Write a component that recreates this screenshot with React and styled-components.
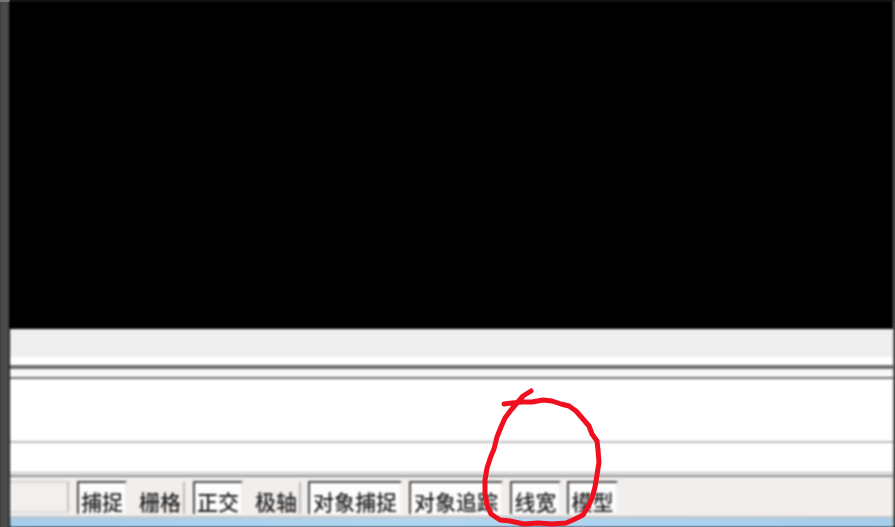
import React from "react";
import styled, { createGlobalStyle } from "styled-components";

const Global = createGlobalStyle`
  html, body { margin: 0; padding: 0; background: #000; overflow: hidden; }
  #root { width: 895px; height: 527px; }
`;

const Shot = styled.div`
  position: relative;
  width: 895px;
  height: 527px;
  display: flex;
  background: #000;
  overflow: hidden;
  font-family: "Noto Sans CJK SC", "Liberation Sans", sans-serif;
`;

const Frame = styled.div`
  width: 10px;
  flex: none;
  box-sizing: border-box;
  background: linear-gradient(90deg, #3a3a3a 0, #4a4a4a 2px, #4a4a4a 7px, #222 10px);
  border-top: 2px solid #777;
`;

const Main = styled.div`
  flex: 1;
  display: flex;
  flex-direction: column;
  min-width: 0;
  border-right: 2px solid #6a6a6a;
  filter: blur(0.8px);
`;

const Canvas = styled.div`
  height: 329px;
  flex: none;
  background: #000;
  border-top: 1px solid #333;
  box-sizing: border-box;
`;

const ScrollBand = styled.div`
  height: 28px;
  flex: none;
  background: #efefef;
`;

const Gap = styled.div`
  flex: none;
  height: ${(p) => p.$h}px;
  background: ${(p) => p.$bg || "#fff"};
`;

const Rule = styled.div`
  flex: none;
  height: ${(p) => p.$h || 2}px;
  background: ${(p) => p.$color || "#6f6f6f"};
`;

const StatusBar = styled.div`
  height: 39px;
  flex: none;
  background: #f1eeec;
  display: flex;
  align-items: flex-start;
  padding-top: 4px;
  box-sizing: border-box;
`;

const Field = styled.div`
  width: 59px;
  height: 32px;
  box-sizing: border-box;
  background: #f2efed;
  border-right: 2px solid #c4c4c4;
  border-top: 2px solid #d8d8d8;
  border-bottom: 2px solid #dcdcdc;
  margin-right: 8px;
`;

const Toggle = styled.div`
  width: ${(p) => p.$w}px;
  height: 33px;
  margin-right: ${(p) => p.$mr}px;
  box-sizing: border-box;
  display: flex;
  align-items: center;
  justify-content: center;
  padding-top: 5px;
  font-size: 21px;
  font-weight: 500;
  line-height: 24px;
  color: #1f1f1f;
  white-space: nowrap;
  background: ${(p) => (p.$on ? "#fdfdfd" : "#f1eeec")};
  border-top: 2px solid ${(p) => (p.$on ? "#4a4a4a" : "#f1eeec")};
  border-left: 2px solid ${(p) => (p.$on ? "#4a4a4a" : "#f1eeec")};
  border-right: 2px solid ${(p) => (p.$on ? "#f1eeec" : "#bcbcbc")};
`;

const Taskbar = styled.div`
  flex: 1;
  background: linear-gradient(90deg, #a4cdec, #b2d7f2 50%, #a4cdec);
  border-top: 2px solid #c4c4c4;
`;

const Scribble = styled.svg`
  position: absolute;
  left: 0;
  top: 0;
  width: 895px;
  height: 527px;
  pointer-events: none;
  filter: blur(0.5px);
`;

const buttons = [
  { t: "捕捉", w: 50, mr: 8, on: true },
  { t: "栅格", w: 50, mr: 8 },
  { t: "正交", w: 50, mr: 8, on: true },
  { t: "极轴", w: 50, mr: 7 },
  { t: "对象捕捉", w: 94, mr: 7, on: true },
  { t: "对象追踪", w: 94, mr: 7, on: true },
  { t: "线宽", w: 51, mr: 6, on: true },
  { t: "模型", w: 51, mr: 0, on: true },
];

export default function App() {
  return (
    <Shot>
      <Global />
      <Frame />
      <Main>
        <Canvas />
        <ScrollBand />
        <Gap $h={8} />
        <Rule $h={4} />
        <Gap $h={8} $bg="#f8f8f8" />
        <Rule $h={2} />
        <Gap $h={62} />
        <Rule $h={2} $color="#bcbcbc" />
        <Gap $h={29} />
        <Rule $h={1} $color="#b4b4b4" />
        <Gap $h={2} $bg="#eee" />
        <Rule $h={2} $color="#8e8e8e" />
        <StatusBar>
          <Field />
          {buttons.map((b) => (
            <Toggle key={b.t} $w={b.w} $mr={b.mr} $on={b.on}>
              {b.t}
            </Toggle>
          ))}
        </StatusBar>
        <Taskbar />
      </Main>
      <Scribble viewBox="0 0 895 527" fill="none">
        <path
          d="M504 404 L512 403 L522 402 L532 402 L543 400 L552 401 L561 404 L569 406 L576 411 L583 419 L589 426 L592 434 L597 441 L598 450 L599 462 L597 475 L595 487 L592 498 L588 507 L583 515 L575 519 L566 523 L552 524 L538 523 L524 524 L510 521 L500 520 L491 514 L487 505 L485 493 L485 480 L487 468 L491 456 L494 449 L497 437 L501 427 L505 418 L511 410 L517 403 L523 396 L531 391"
          stroke="#f00f1e"
          strokeWidth="5"
          strokeLinecap="round"
          strokeLinejoin="round"
        />
      </Scribble>
    </Shot>
  );
}
